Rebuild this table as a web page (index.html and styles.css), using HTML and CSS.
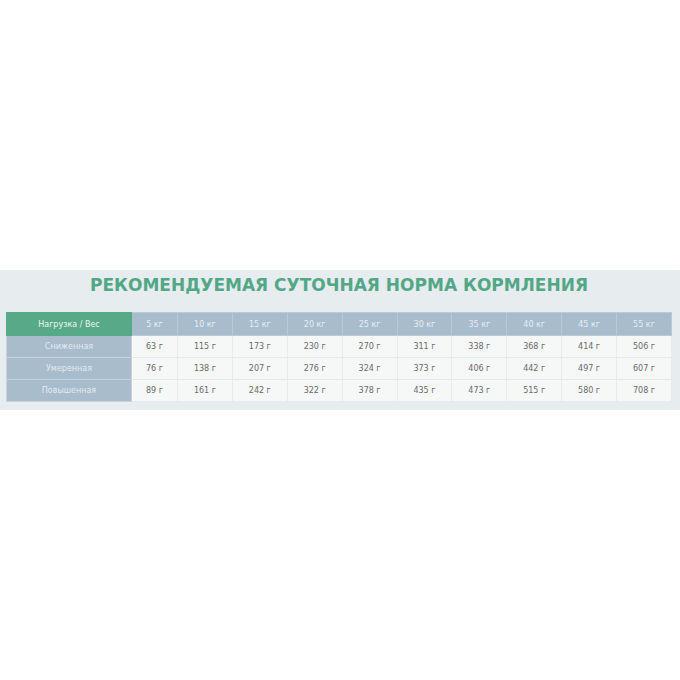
FILE: index.html
```html
<!DOCTYPE html>
<html lang="ru">
<head>
<meta charset="utf-8">
<link rel="stylesheet" href="styles.css">
</head>
<body>
<div class="page">
  <section class="panel">
    <h2 class="title">Рекомендуемая суточная норма кормления</h2>
    <table class="norm">
      <colgroup>
        <col class="c-label"><col class="c-first"><col><col><col><col><col><col><col><col><col>
      </colgroup>
      <thead>
        <tr>
          <th class="corner">Нагрузка / Вес</th>
          <th>5 кг</th><th>10 кг</th><th>15 кг</th><th>20 кг</th><th>25 кг</th><th>30 кг</th><th>35 кг</th><th>40 кг</th><th>45 кг</th><th>55 кг</th>
        </tr>
      </thead>
      <tbody>
        <tr>
          <th>Сниженная</th>
          <td>63 г</td><td>115 г</td><td>173 г</td><td>230 г</td><td>270 г</td><td>311 г</td><td>338 г</td><td>368 г</td><td>414 г</td><td>506 г</td>
        </tr>
        <tr>
          <th>Умеренная</th>
          <td>76 г</td><td>138 г</td><td>207 г</td><td>276 г</td><td>324 г</td><td>373 г</td><td>406 г</td><td>442 г</td><td>497 г</td><td>607 г</td>
        </tr>
        <tr>
          <th>Повышенная</th>
          <td>89 г</td><td>161 г</td><td>242 г</td><td>322 г</td><td>378 г</td><td>435 г</td><td>473 г</td><td>515 г</td><td>580 г</td><td>708 г</td>
        </tr>
      </tbody>
    </table>
  </section>
</div>
</body>
</html>
```

FILE: styles.css
```css
html, body {
  margin: 0;
  padding: 0;
  background: #ffffff;
}

.page {
  width: 680px;
  height: 680px;
  display: flex;
  flex-direction: column;
  justify-content: flex-start;
  padding-top: 270px;
  box-sizing: border-box;
}

.panel {
  background: #e7ecef;
  padding: 0 8px 8px 6px;
  height: 140px;
  box-sizing: border-box;
  display: flex;
  flex-direction: column;
  align-items: stretch;
}

.title {
  margin: 0;
  height: 30px;
  line-height: 30px;
  text-align: center;
  text-transform: uppercase;
  font-family: "DejaVu Sans", sans-serif;
  font-weight: bold;
  font-size: 17px;
  letter-spacing: 0;
  color: #52a786;
  margin-bottom: 12px;
}

.norm {
  width: 666px;
  border-collapse: collapse;
  table-layout: fixed;
  font-family: "DejaVu Sans", "Liberation Sans", sans-serif;
  font-size: 8px;
}

.c-label { width: 125px; }
.c-first { width: 46px; }

.norm th,
.norm td {
  height: 21px;
  padding: 0;
  text-align: center;
  font-weight: normal;
  border: 1px solid #e9eeef;
}

.norm thead th {
  height: 22px;
  background: #a9bccb;
  color: #e6edf2;
  border-color: #bccad5;
}

.norm thead th.corner {
  background: #58a988;
  color: #eef7f2;
  border-color: #58a988;
}

.norm tbody th {
  background: #a9bccb;
  color: #e3eaef;
  border-color: #c7d3dc;
}

.norm tbody td {
  background: #f6f7f7;
  color: #6a6a6a;
  border-color: #e6eaec;
}
```
